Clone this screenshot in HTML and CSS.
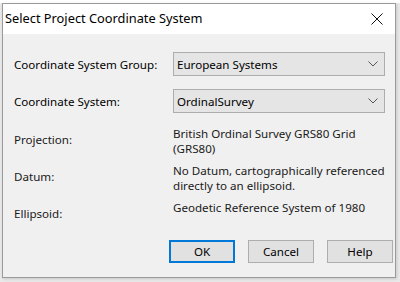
FILE: index.html
```html
<!DOCTYPE html>
<html>
<head>
<meta charset="utf-8">
<link rel="stylesheet" href="styles.css">
</head>
<body>
<div class="dialog">
  <div class="titlebar">
    <span class="title">Select Project Coordinate System</span>
    <svg class="close" width="12" height="12" viewBox="0 0 12 12"><path d="M0.5 0.5 L11.5 11.5 M11.5 0.5 L0.5 11.5" stroke="#111" stroke-width="1" fill="none"/></svg>
  </div>
  <div class="content">
    <div class="selects">
      <div class="label">Coordinate System Group:</div>
      <div class="combo"><span>European Systems</span><svg width="10" height="6" viewBox="0 0 10 6"><path d="M0.5 0.5 L5 5 L9.5 0.5" stroke="#555" stroke-width="1" fill="none"/></svg></div>
      <div class="label">Coordinate System:</div>
      <div class="combo"><span>OrdinalSurvey</span><svg width="10" height="6" viewBox="0 0 10 6"><path d="M0.5 0.5 L5 5 L9.5 0.5" stroke="#555" stroke-width="1" fill="none"/></svg></div>
    </div>
    <div class="info">
      <div class="ilabel">Projection:</div>
      <div class="value">British Ordinal Survey GRS80 Grid<br>(GRS80)</div>
      <div class="ilabel">Datum:</div>
      <div class="value">No Datum, cartographically referenced<br>directly to an ellipsoid.</div>
      <div class="ilabel">Ellipsoid:</div>
      <div class="value">Geodetic Reference System of 1980</div>
    </div>
    <div class="buttons">
      <button class="btn default">OK</button>
      <button class="btn">Cancel</button>
      <button class="btn">Help</button>
    </div>
  </div>
</div>
</body>
</html>
```
FILE: styles.css
```css
html, body {
  margin: 0;
  padding: 0;
}
body {
  width: 400px;
  height: 282px;
  overflow: hidden;
  background: linear-gradient(#ffffff 0, #ffffff 3px, #e9e9e9 3px);
  font-family: "Noto Sans", "Open Sans", sans-serif;
  font-size: 11.6px;
  color: #1a1a1a;
}
.dialog {
  margin: 3px 0 0 2px;
  width: 394px;
  height: 275px;
  box-sizing: border-box;
  border: 1px solid #9a9a9a;
  background: #f0f0f0;
  display: flex;
  flex-direction: column;
  box-shadow: 1px 1px 3px rgba(0,0,0,0.15);
}
.titlebar {
  height: 30px;
  background: #ffffff;
  display: flex;
  align-items: center;
  justify-content: space-between;
  padding: 0 12px 0 2px;
  flex: none;
}
.title {
  font-size: 12.8px;
  color: #000;
  padding-bottom: 2px;
}
.close {
  display: block;
}
.content {
  flex: 1;
  display: flex;
  flex-direction: column;
}
.selects {
  display: grid;
  grid-template-columns: 159px 1fr;
  row-gap: 13px;
  margin: 18px 10px 0 11px;
  align-items: center;
}
.combo {
  height: 24px;
  box-sizing: border-box;
  border: 1px solid #adadad;
  background: #e5e5e5;
  display: flex;
  align-items: center;
  justify-content: space-between;
  padding: 0 6px 0 3px;
  color: #000;
}
.label {
  color: #000;
  white-space: nowrap;
}
.info {
  display: grid;
  grid-template-columns: 159px 1fr;
  row-gap: 7px;
  margin: 13px 10px 0 11px;
  line-height: 15px;
}
.value {
  white-space: nowrap;
}
.ilabel {
  padding-top: 6px;
}
.buttons {
  margin-top: auto;
  margin-bottom: 14px;
  display: flex;
  justify-content: flex-end;
  gap: 13px;
  padding-right: 2px;
}
.btn {
  width: 66px;
  height: 23px;
  box-sizing: border-box;
  border: 1px solid #adadad;
  background: #e1e1e1;
  font-family: "Noto Sans", "Open Sans", sans-serif;
  font-size: 11.6px;
  color: #000;
  padding: 0;
  margin: 0;
}
.btn.default {
  border: 2px solid #0078d7;
}
```
